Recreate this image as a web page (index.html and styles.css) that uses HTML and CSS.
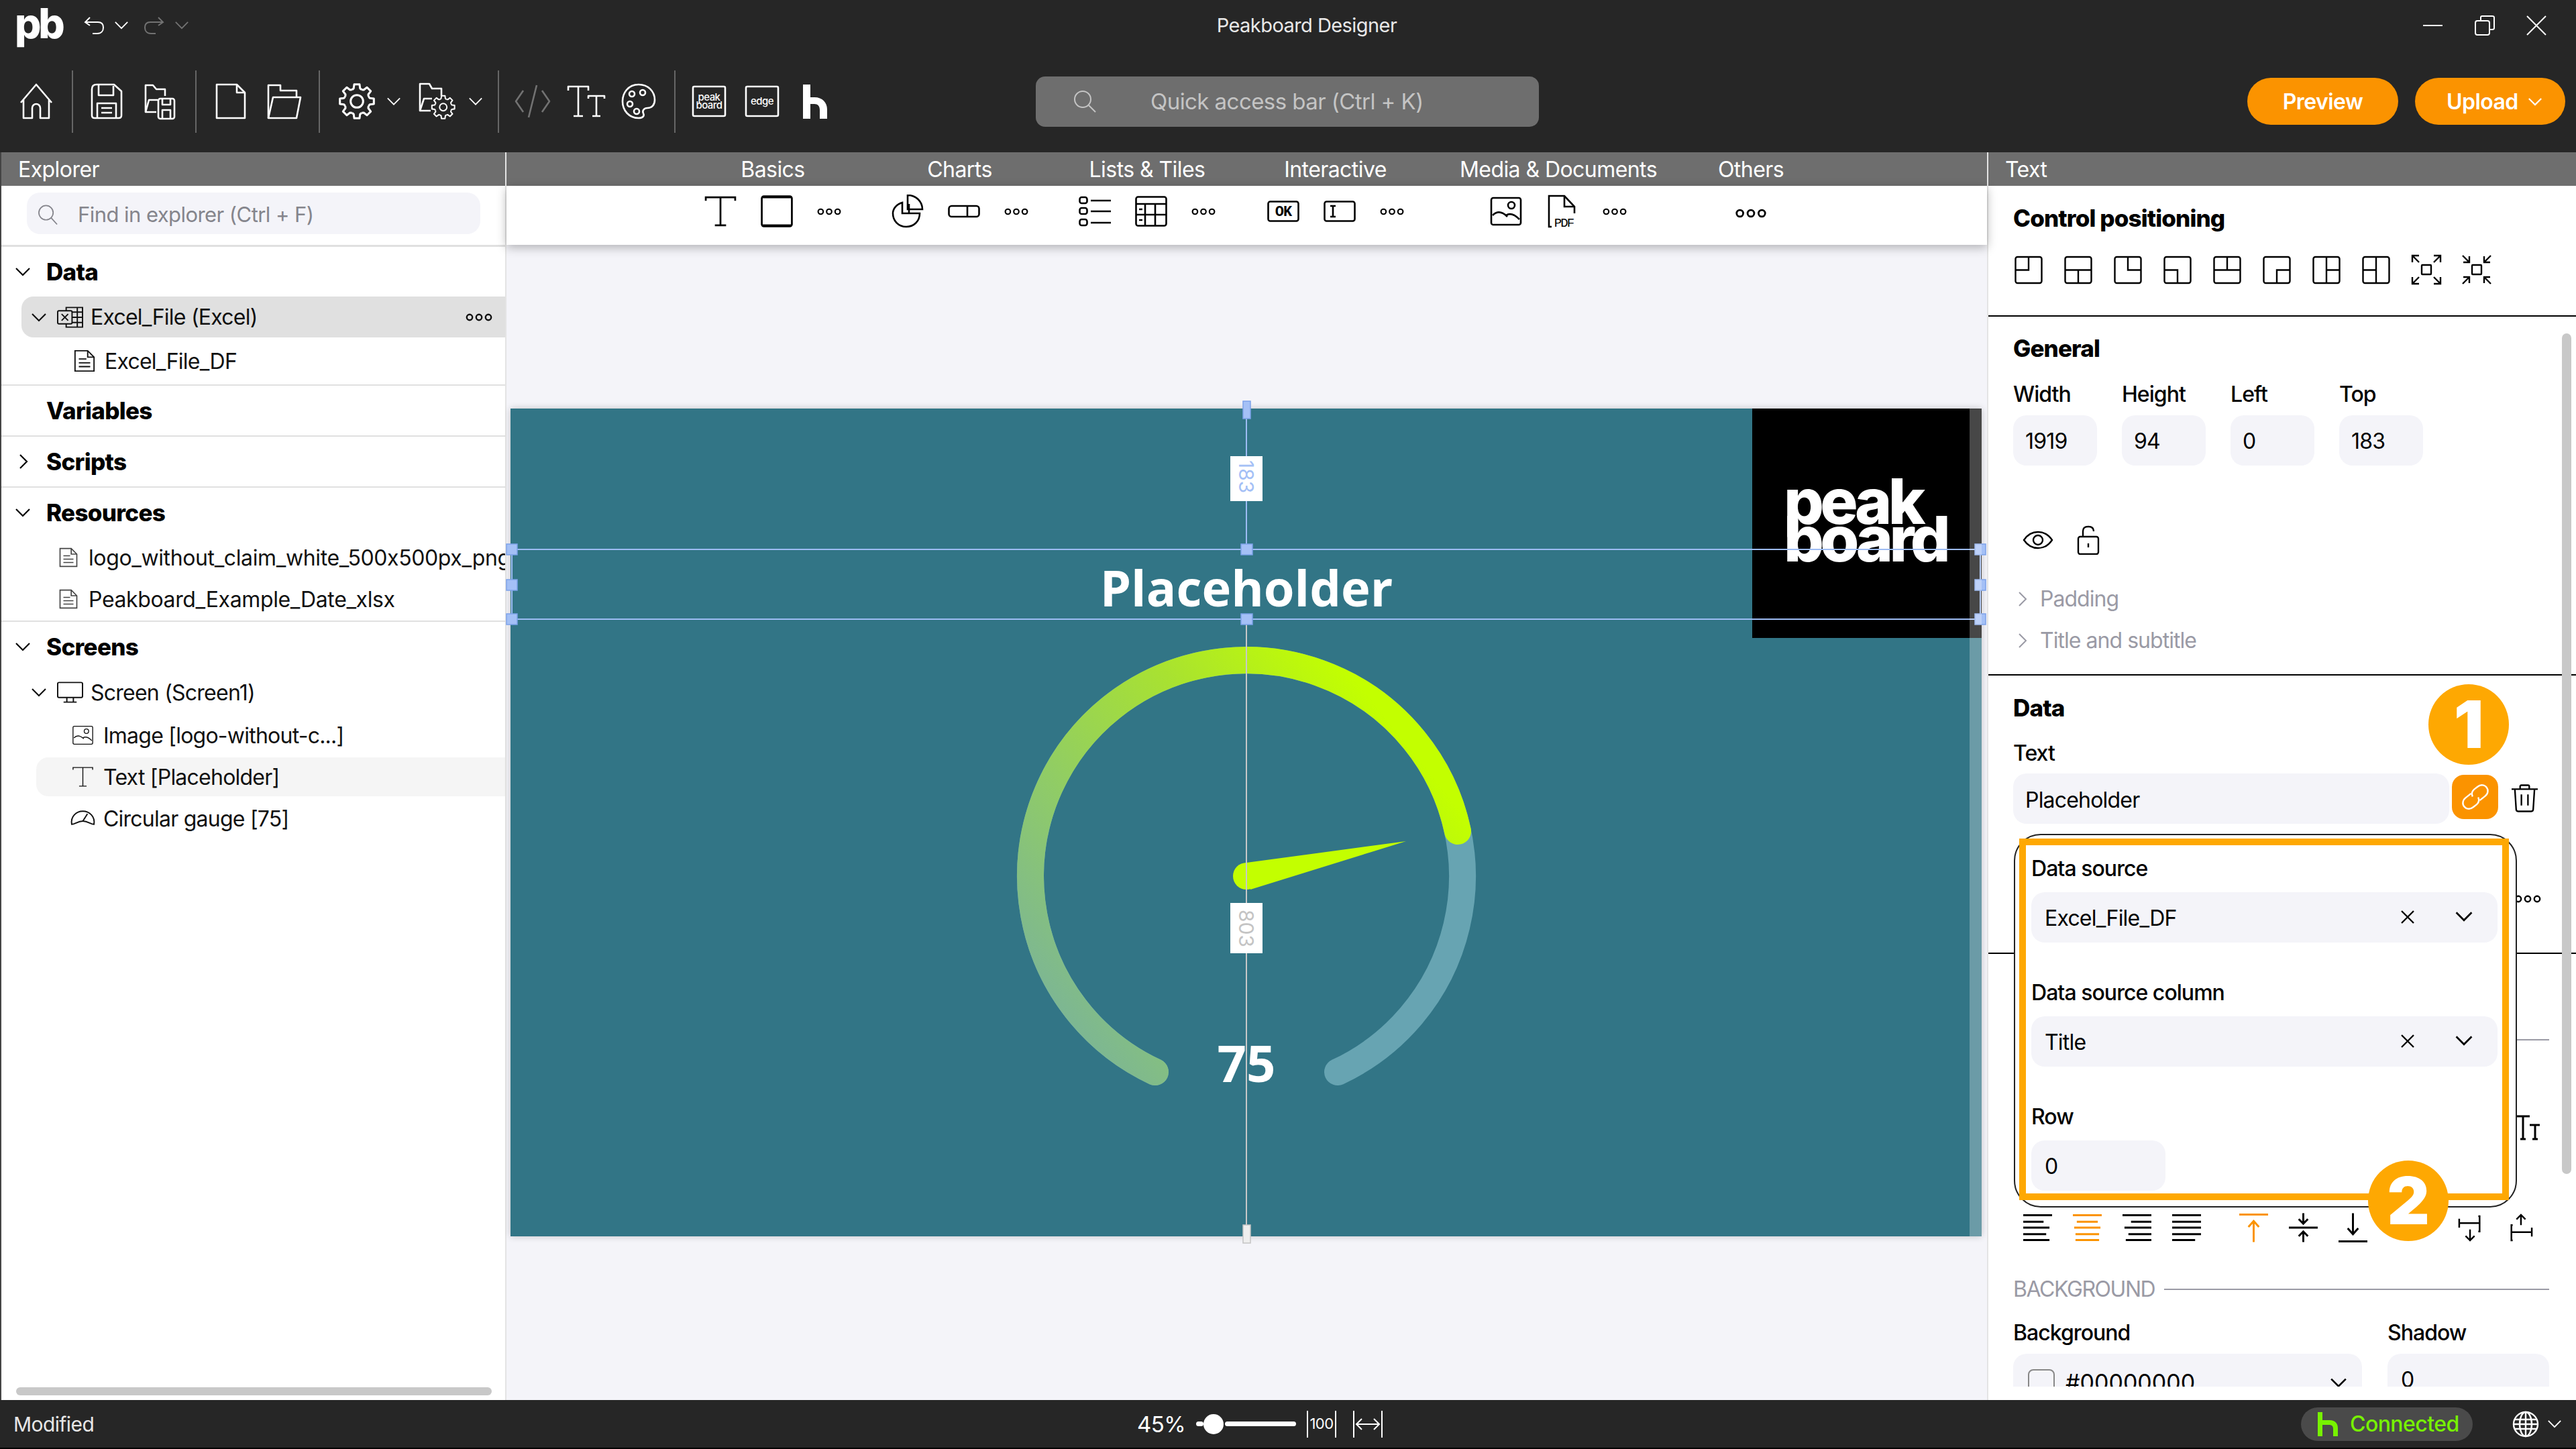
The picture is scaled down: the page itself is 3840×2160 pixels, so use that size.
FILE: index.html
```html
<!DOCTYPE html>
<html lang="en">
<head>
    <meta charset="UTF-8">
    <title>Peakboard Designer</title>
    <link rel="stylesheet" href="styles.css">
</head>
<body>

<svg class="defs" xmlns="http://www.w3.org/2000/svg">
    <defs>
        <path id="gear-seg" d="M17.9 9.2 19.9 7.5 20.6 2.3H27.4L28.1 7.5 30.1 9.2"/>
        <g id="gear-shape">
            <use href="#gear-seg"/>
            <use href="#gear-seg" transform="rotate(45 24 24)"/>
            <use href="#gear-seg" transform="rotate(90 24 24)"/>
            <use href="#gear-seg" transform="rotate(135 24 24)"/>
            <use href="#gear-seg" transform="rotate(180 24 24)"/>
            <use href="#gear-seg" transform="rotate(225 24 24)"/>
            <use href="#gear-seg" transform="rotate(270 24 24)"/>
            <use href="#gear-seg" transform="rotate(315 24 24)"/>
        </g>
        <linearGradient id="gauge-fill" gradientUnits="userSpaceOnUse" x1="1620" y1="1640" x2="2170" y2="1200">
            <stop offset="0" stop-color="#78b19e"/>
            <stop offset="0.35" stop-color="#8fcb68"/>
            <stop offset="0.7" stop-color="#a9e230"/>
            <stop offset="1" stop-color="#c3ff00"/>
        </linearGradient>
    </defs>
    <symbol id="chev-down" viewBox="0 0 24 14"><path d="M2 2 12 12 22 2"/></symbol>
    <symbol id="chev-right" viewBox="0 0 14 24"><path d="M2 2 12 12 2 22"/></symbol>
    <symbol id="dots" viewBox="0 0 40 12"><circle cx="6" cy="6" r="4.2"/><circle cx="20" cy="6" r="4.2"/><circle cx="34" cy="6" r="4.2"/></symbol>
    <symbol id="doc-lines" viewBox="0 0 36 36"><path d="M3 2H23L33 12V34H3Z"/><path d="M23 2V12H33M9 15H21M9 21H27M9 27H27"/></symbol>
    <symbol id="text-t" viewBox="0 0 46 46"><path d="M2 8V3H44V8M23 3V43M15 43H31"/></symbol>
    <symbol id="image" viewBox="0 0 48 48"><rect x="2" y="4" width="44" height="40" rx="3"/><circle cx="32" cy="15" r="5"/><path d="M4 30C12 22 20 26 26 32M24 30C30 26 36 28 44 36"/></symbol>
</svg>

<div class="app">
    <header class="titlebar">
        <div class="title-left">
            <span class="pb-logo">pb</span>
            <svg class="ic-undo" viewBox="0 0 32 28"><path d="M10 2 3 9 10 14M3 9H22C28 9 30 13 30 17 30 22 27 26 21 26H14"/></svg>
            <svg class="ic-chev-sm"><use href="#chev-down"/></svg>
            <svg class="ic-undo dim" viewBox="0 0 32 28"><path d="M22 2 29 9 22 14M29 9H10C4 9 2 13 2 17 2 22 5 26 11 26H18"/></svg>
            <svg class="ic-chev-sm dim"><use href="#chev-down"/></svg>
        </div>
        <div class="title-text">Peakboard Designer</div>
        <div class="window-btns">
            <svg viewBox="0 0 30 30"><path d="M0 15H29"/></svg>
            <svg viewBox="0 0 30 30"><path d="M9 7V3Q9 1 11 1H26Q29 1 29 3V19Q29 21 26 21H23"/><rect x="1" y="8" width="21" height="21" rx="3"/></svg>
            <svg viewBox="0 0 30 30"><path d="M1 1 29 29M29 1 1 29"/></svg>
        </div>
    </header>

    <div class="toolbar">
        <div class="tool-groups">
            <div class="tool-group">
                <svg class="tool" viewBox="0 0 64 56"><path d="M9 30 32 3 55 30M13 26V53H26V38A6 6 0 0 1 38 38V53H51V26"/></svg>
            </div>
            <div class="tool-group">
                <svg class="tool" viewBox="0 0 64 56"><path d="M17 3H43L54 13V49Q54 53 50 53H14Q10 53 10 49V10Q10 3 17 3Z"/><path d="M20 3V19H42V5M18 53V31H46V53M24 38H40M24 45H40"/></svg>
                <svg class="tool" viewBox="0 0 64 56"><path d="M27 44H11V4H22L27 10H40V20"/><path d="M11 44 16 26H29"/><rect x="30" y="24" width="24" height="30" rx="3"/><path d="M36 24V33H48V24M36 54V41H48V54"/></svg>
            </div>
            <div class="tool-group">
                <svg class="tool" viewBox="0 0 64 56"><path d="M12 3H42L54 15V53H12Z"/><path d="M42 3V15H54"/></svg>
                <svg class="tool" viewBox="0 0 64 56"><path d="M10 53V4H28V12H52V22"/><path d="M10 53 17 22H58L52 53Z"/></svg>
            </div>
            <div class="tool-group group-settings">
                <svg class="tool" viewBox="0 0 48 48"><use href="#gear-shape"/><circle cx="24" cy="24" r="8"/></svg>
                <svg class="tool-chev"><use href="#chev-down"/></svg>
                <svg class="tool folder-gear" viewBox="0 0 64 56"><path d="M26 42H10V2H24L28 9H42V20"/><path d="M10 42 16 24H28"/><g transform="translate(26 18) scale(.78)"><use href="#gear-shape"/><circle cx="24" cy="24" r="7"/></g></svg>
                <svg class="tool-chev"><use href="#chev-down"/></svg>
            </div>
            <div class="tool-group">
                <svg class="tool dim" viewBox="0 0 64 56"><path d="M18 12 7 28 18 44M46 12 57 28 46 44M38 4 26 52"/></svg>
                <svg class="tool" viewBox="0 0 64 56"><path d="M6 12V6H36V12M21 6V50M14 50H28M36 24V20H60V24M48 20V50M42 50H54"/></svg>
                <svg class="tool" viewBox="0 0 64 56"><path d="M32 3C16 3 8 16 8 28 8 42 18 53 32 53 38 53 41 50 39 46 37 42 40 38 45 38 52 38 56 33 56 26 56 13 46 3 32 3Z"/><circle cx="22" cy="17" r="4"/><circle cx="38" cy="15" r="4"/><circle cx="19" cy="32" r="4"/><circle cx="29" cy="43" r="4"/></svg>
            </div>
            <div class="tool-group">
                <svg class="tool" viewBox="0 0 64 56"><rect x="8" y="6" width="48" height="44" rx="2"/><text class="tool-word" x="32" y="27">peak</text><text class="tool-word" x="32" y="39">board</text></svg>
                <svg class="tool" viewBox="0 0 64 56"><rect x="8" y="6" width="48" height="44" rx="2"/><text class="tool-word" x="32" y="33">edge</text></svg>
                <svg class="tool" viewBox="0 0 64 56"><path class="solid" d="M14 3H25V22H31C43 22 50 30 50 40V54H39V41C39 35 36 32 31 32H25V54H14Z"/></svg>
            </div>
        </div>
        <div class="quick-bar">
            <svg viewBox="0 0 36 36"><circle cx="15" cy="15" r="12"/><path d="M24 24 34 34"/></svg>
            <span>Quick access bar (Ctrl + K)</span>
        </div>
        <div class="action-btns">
            <div class="btn-orange btn-preview">Preview</div>
            <div class="btn-orange btn-upload">Upload <svg><use href="#chev-down"/></svg></div>
        </div>
    </div>

    <div class="main">
        <aside class="explorer">
            <div class="panel-head">Explorer</div>
            <div class="search-wrap">
                <div class="search-box">
                    <svg viewBox="0 0 32 32"><circle cx="13" cy="13" r="11"/><path d="M21 21 30 31"/></svg>
                    <span>Find in explorer (Ctrl + F)</span>
                </div>
            </div>
            <div class="tree">
                <section class="tree-section">
                    <div class="tree-head"><svg class="chev"><use href="#chev-down"/></svg>Data</div>
                    <div class="row row-selected">
                        <svg class="chev"><use href="#chev-down"/></svg>
                        <svg class="row-ic wide" viewBox="0 0 40 32"><rect x="1" y="6" width="22" height="20" rx="2"/><path d="M7 11 17 21M17 11 7 21M14 6V1H39V31H14V26M23 8H39M23 16H39M23 24H39M31 1V31"/></svg>
                        <span>Excel_File (Excel)</span>
                        <svg class="row-dots"><use href="#dots"/></svg>
                    </div>
                    <div class="row row-child">
                        <svg class="row-ic doc"><use href="#doc-lines"/></svg>
                        <span>Excel_File_DF</span>
                    </div>
                </section>
                <section class="tree-section">
                    <div class="tree-head"><span class="chev"></span>Variables</div>
                </section>
                <section class="tree-section">
                    <div class="tree-head"><svg class="chev chev-r"><use href="#chev-right"/></svg>Scripts</div>
                </section>
                <section class="tree-section res-section">
                    <div class="tree-head"><svg class="chev"><use href="#chev-down"/></svg>Resources</div>
                    <div class="row row-res">
                        <svg class="row-ic res"><use href="#doc-lines"/></svg>
                        <span>logo_without_claim_white_500x500px_png</span>
                    </div>
                    <div class="row row-res">
                        <svg class="row-ic res"><use href="#doc-lines"/></svg>
                        <span>Peakboard_Example_Date_xlsx</span>
                    </div>
                </section>
                <section class="tree-section no-line">
                    <div class="tree-head"><svg class="chev"><use href="#chev-down"/></svg>Screens</div>
                    <div class="row row-screen">
                        <svg class="chev"><use href="#chev-down"/></svg>
                        <svg class="row-ic wide" viewBox="0 0 40 32"><rect x="1" y="1" width="38" height="23" rx="2"/><path d="M15 24V31M25 24V31M10 31H30"/></svg>
                        <span>Screen (Screen1)</span>
                    </div>
                    <div class="row row-child2">
                        <svg class="row-ic wide"><use href="#image"/></svg>
                        <span>Image [logo-without-c...]</span>
                    </div>
                    <div class="row row-child2 row-hover">
                        <svg class="row-ic wide"><use href="#text-t"/></svg>
                        <span>Text [Placeholder]</span>
                    </div>
                    <div class="row row-child2">
                        <svg class="row-ic wide" viewBox="0 0 40 32"><path d="M3 25C1 13 10 5 20 5 30 5 39 13 37 25 32 25 28 20 20 20 12 20 8 25 3 25Z"/><path d="M20 20 27 9"/></svg>
                        <span>Circular gauge [75]</span>
                    </div>
                </section>
            </div>
            <div class="hscroll"></div>
        </aside>

        <main class="stage">
            <div class="ribbon-labels">
                <div>Basics</div><div>Charts</div><div>Lists &amp; Tiles</div><div>Interactive</div><div>Media &amp; Documents</div><div>Others</div>
            </div>
            <div class="ribbon-tools">
                <div class="ribbon-cell">
                    <svg class="rb" viewBox="0 0 46 46"><use href="#text-t"/></svg>
                    <svg class="rb" viewBox="0 0 46 46"><rect x="1.5" y="1.5" width="43" height="43" rx="3"/><path d="M2 3H44M2 43H44"/></svg>
                    <svg class="rb-dots"><use href="#dots"/></svg>
                </div>
                <div class="ribbon-cell">
                    <svg class="rb" viewBox="0 0 48 50"><path d="M26 14V28H42C42 40 33 48 22 48 10 48 2 39 2 28 2 21 8 14 16 12V28H26"/><path d="M24 1V22H46C46 10 36 1 24 1Z"/></svg>
                    <svg class="rb" viewBox="0 0 48 48"><rect x="1.5" y="16" width="45" height="16" rx="4"/><path d="M29 16V32"/></svg>
                    <svg class="rb-dots"><use href="#dots"/></svg>
                </div>
                <div class="ribbon-cell">
                    <svg class="rb" viewBox="0 0 48 46"><rect x="1.5" y="2" width="11" height="9" rx="3"/><rect x="1.5" y="18" width="11" height="9" rx="3"/><rect x="1.5" y="35" width="11" height="9" rx="3"/><path d="M18 7H48M18 23H48M18 40H48"/></svg>
                    <svg class="rb" viewBox="0 0 48 46"><rect x="1.5" y="1.5" width="45" height="43" rx="3"/><path d="M2 12H46M2 28H46M15 12V44M30 12V44M6 20H11M6 36H11"/></svg>
                    <svg class="rb-dots"><use href="#dots"/></svg>
                </div>
                <div class="ribbon-cell">
                    <svg class="rb" viewBox="0 0 48 32"><rect x="1.5" y="1.5" width="45" height="29" rx="3"/><text class="rb-word" x="24" y="23">OK</text></svg>
                    <svg class="rb" viewBox="0 0 48 32"><rect x="1.5" y="1.5" width="45" height="29" rx="3"/><path d="M10 8H18M14 8V24M10 24H18"/></svg>
                    <svg class="rb-dots"><use href="#dots"/></svg>
                </div>
                <div class="ribbon-cell">
                    <svg class="rb" viewBox="0 0 48 50"><use href="#image"/></svg>
                    <svg class="rb rb-pdf" viewBox="0 0 48 50"><path d="M8 48H4V2H27L42 18V28"/><path d="M27 2V18H42"/><text class="rb-word pdf" x="26" y="48">PDF</text></svg>
                    <svg class="rb-dots"><use href="#dots"/></svg>
                </div>
                <div class="ribbon-cell">
                    <svg class="rb-dots big"><use href="#dots"/></svg>
                </div>
            </div>
            <div class="stage-body">
                <div class="canvas">
                    <div class="canvas-logo"><span>peak</span><span>board</span></div>
                    <svg class="canvas-art" viewBox="761 609 2193 1234">
                        <path class="gauge-track" d="M1722 1598A322 322 0 1 1 1994 1598"/>
                        <path class="gauge-value" d="M1722 1598A322 322 0 1 1 2173 1239"/>
                        <circle class="gauge-needle" cx="1858" cy="1306" r="20"/>
                        <path class="gauge-needle" d="M1858 1286 2096 1254 1864 1326Z"/>
                        <text class="art-title" x="1858" y="904">Placeholder</text>
                        <text class="art-value" x="1858" y="1613">75</text>
                        <path class="sel-grey" d="M1858 923V1826"/>
                        <path class="sel-line" d="M1858 623V819M761 819H2952M761 923H2952M763 819V923M2952 819V923"/>
                        <rect class="sel-handle" x="1853" y="598" width="11" height="26"/>
                        <rect class="sel-handle" x="1850" y="811" width="17" height="16"/>
                        <rect class="sel-handle" x="1850" y="915" width="17" height="16"/>
                        <rect class="sel-handle" x="755" y="811" width="16" height="16"/>
                        <rect class="sel-handle" x="755" y="864" width="16" height="16"/>
                        <rect class="sel-handle" x="755" y="915" width="16" height="16"/>
                        <rect class="sel-handle" x="2944" y="811" width="16" height="16"/>
                        <rect class="sel-handle" x="2944" y="864" width="16" height="16"/>
                        <rect class="sel-handle" x="2944" y="915" width="16" height="16"/>
                        <rect class="sel-handle-grey" x="1853" y="1826" width="11" height="27"/>
                        <rect class="sel-tag" x="1834" y="680" width="48" height="67"/>
                        <text class="sel-num blue" transform="translate(1847 686) rotate(90)">183</text>
                        <rect class="sel-tag" x="1834" y="1346" width="48" height="75"/>
                        <text class="sel-num" transform="translate(1847 1356) rotate(90)">803</text>
                    </svg>
                    <div class="canvas-strip"></div>
                </div>
            </div>
        </main>

        <aside class="props">
            <div class="panel-head">Text</div>
            <section class="props-top">
                <h3>Control positioning</h3>
                <div class="pos-row">
                    <svg class="pos" viewBox="0 0 42 42"><rect x="1.5" y="1.5" width="39" height="39" rx="3"/><path d="M21 2V21H2"/></svg>
                    <svg class="pos" viewBox="0 0 42 42"><rect x="1.5" y="1.5" width="39" height="39" rx="3"/><path d="M2 21H40M21 21V40"/></svg>
                    <svg class="pos" viewBox="0 0 42 42"><rect x="1.5" y="1.5" width="39" height="39" rx="3"/><path d="M21 2V21H40"/></svg>
                    <svg class="pos" viewBox="0 0 42 42"><rect x="1.5" y="1.5" width="39" height="39" rx="3"/><path d="M2 21H21V40"/></svg>
                    <svg class="pos" viewBox="0 0 42 42"><rect x="1.5" y="1.5" width="39" height="39" rx="3"/><path d="M2 21H40M21 2V21"/></svg>
                    <svg class="pos" viewBox="0 0 42 42"><rect x="1.5" y="1.5" width="39" height="39" rx="3"/><path d="M40 21H21V40"/></svg>
                    <svg class="pos" viewBox="0 0 42 42"><rect x="1.5" y="1.5" width="39" height="39" rx="3"/><path d="M21 2V40M21 21H40"/></svg>
                    <svg class="pos" viewBox="0 0 42 42"><rect x="1.5" y="1.5" width="39" height="39" rx="3"/><path d="M21 2V40M2 21H21"/></svg>
                    <svg class="pos pos-arrows" viewBox="0 0 46 46"><rect x="16" y="16" width="14" height="14" rx="1"/><path d="M2 12V2H12M2 2 12 12M34 2H44V12M44 2 34 12M2 34V44H12M2 44 12 34M34 44H44V34M44 44 34 34"/></svg>
                    <svg class="pos pos-arrows" viewBox="0 0 46 46"><rect x="16" y="16" width="14" height="14" rx="1"/><path d="M2 2 12 12M12 3V12H3M44 2 34 12M34 3V12H43M2 44 12 34M12 43V34H3M44 44 34 34M34 43V34H43"/></svg>
                </div>
            </section>
            <div class="props-scroll">
                <section class="props-general">
                    <h3>General</h3>
                    <div class="field-row">
                        <div class="field"><label>Width</label><div class="input">1919</div></div>
                        <div class="field"><label>Height</label><div class="input">94</div></div>
                        <div class="field"><label>Left</label><div class="input">0</div></div>
                        <div class="field"><label>Top</label><div class="input">183</div></div>
                    </div>
                    <div class="visibility">
                        <svg class="ic-eye" viewBox="0 0 46 28"><path d="M2 14C8 5 15 2 23 2 31 2 38 5 44 14 38 23 31 26 23 26 15 26 8 23 2 14Z"/><circle cx="23" cy="14" r="7"/></svg>
                        <svg class="ic-lock" viewBox="0 0 34 44"><rect x="2" y="17" width="30" height="26" rx="3"/><path d="M9 17V9C9 4 12 2 17 2 22 2 25 4 25 9M17 27V33"/></svg>
                    </div>
                    <div class="collapsed first"><svg><use href="#chev-right"/></svg>Padding</div>
                    <div class="collapsed"><svg><use href="#chev-right"/></svg>Title and subtitle</div>
                </section>
                <section class="props-data">
                    <h3>Data</h3>
                    <label>Text</label>
                    <div class="text-row">
                        <div class="input input-wide">Placeholder</div>
                        <div class="link-btn"><svg viewBox="0 0 44 36"><g transform="rotate(-38 22 18)"><path d="M20 10H10C4 10 0 14 0 19 0 24 4 28 10 28H16C21 28 24 25 25 21"/><path d="M24 26H34C40 26 44 22 44 17 44 12 40 8 34 8H28C23 8 20 11 19 15"/></g></svg></div>
                        <svg class="ic-trash" viewBox="0 0 42 44"><path d="M1 8H41M14 8V4Q14 2 16 2H26Q28 2 28 4V8M6 8 8 39Q8 42 11 42H31Q34 42 34 39L36 8M16 16V33M26 16V33"/></svg>
                    </div>
                    <div class="behind">
                        <svg class="behind-dots"><use href="#dots"/></svg>
                        <div class="behind-line"></div>
                        <div class="behind-grey"></div>
                        <svg class="behind-tt" viewBox="0 0 36 38"><path d="M1 2H20M10 2V36M6 36H14M20 15H35M28 15V36M24 36H32"/></svg>
                    </div>
                    <div class="align-row">
                        <svg class="al" viewBox="0 0 46 44"><path d="M1 3H45M1 13H32M1 22H41M1 32H36M1 41H41"/></svg>
                        <svg class="al active" viewBox="0 0 46 44"><path d="M1 3H45M7 13H39M3 22H43M5 32H41M5 41H41"/></svg>
                        <svg class="al" viewBox="0 0 46 44"><path d="M1 3H45M14 13H45M4 22H45M10 32H45M6 41H45"/></svg>
                        <svg class="al" viewBox="0 0 46 44"><path d="M1 3H45M1 13H45M1 22H45M1 32H45M1 41H36"/></svg>
                        <span class="al-gap"></span>
                        <svg class="al active" viewBox="0 0 46 44"><path d="M1 2H45M23 44V12M15 21 23 12 31 21"/></svg>
                        <svg class="al" viewBox="0 0 46 44"><path d="M1 22H45M23 0V16M16 9 23 16 30 9M23 44V28M16 35 23 28 30 35"/></svg>
                        <svg class="al" viewBox="0 0 46 44"><path d="M1 43H45M23 0V32M15 23 23 32 31 23"/></svg>
                        <span class="al-slot"></span>
                        <svg class="al wrap" viewBox="0 0 40 44"><path d="M2 8V22M2 15H34V4H32M34 15V28H32M19 25V42M12 35 19 42 26 35"/></svg>
                        <svg class="al wrap" viewBox="0 0 40 44"><path d="M38 22V36M38 29H6V42H8M6 29V18H8M21 18V2M14 9 21 2 28 9"/></svg>
                    </div>
                    <div class="divider-label"><span>BACKGROUND</span><i></i></div>
                    <div class="bg-fields">
                        <div class="bg-field"><label>Background</label>
                            <div class="input input-color"><span class="swatch"></span>#00000000<svg><use href="#chev-down"/></svg></div>
                        </div>
                        <div class="shadow-field"><label>Shadow</label>
                            <div class="input">0</div>
                        </div>
                    </div>
                </section>
            </div>
            <div class="vscroll"></div>

            <div class="popover">
                <div class="highlight">
                    <label>Data source</label>
                    <div class="select">Excel_File_DF<svg class="sel-x" viewBox="0 0 20 20"><path d="M1 1 19 19M19 1 1 19"/></svg><svg class="sel-chev"><use href="#chev-down"/></svg></div>
                    <label class="later">Data source column</label>
                    <div class="select">Title<svg class="sel-x" viewBox="0 0 20 20"><path d="M1 1 19 19M19 1 1 19"/></svg><svg class="sel-chev"><use href="#chev-down"/></svg></div>
                    <label class="later">Row</label>
                    <div class="select select-short">0</div>
                </div>
            </div>
            <div class="badge badge-one">1</div>
            <div class="badge badge-two">2</div>
        </aside>
    </div>

    <footer class="statusbar">
        <div class="status-left">Modified</div>
        <div class="zoom-group">
            <span>45%</span>
            <div class="slider"><i class="slider-a"></i><i class="slider-thumb"></i><i class="slider-b"></i></div>
            <svg class="zoom-ic" viewBox="0 0 44 40"><path d="M1 0V40M43 0V40"/><text x="22" y="27">100</text></svg>
            <svg class="zoom-ic" viewBox="0 0 44 40"><path d="M1 0V40M43 0V40M6 20H38M13 12 5 20 13 28M31 12 39 20 31 28"/></svg>
        </div>
        <div class="status-right">
            <div class="connected">
                <svg viewBox="0 0 30 36"><path d="M0 0H7V36H0ZM7 12H18C26 12 30 17 30 24V36H23V25C23 21 21 19 17 19H7Z"/></svg>
                <span>Connected</span>
            </div>
            <svg class="ic-globe" viewBox="0 0 40 40"><circle cx="20" cy="20" r="18"/><ellipse cx="20" cy="20" rx="9" ry="18"/><path d="M20 2V38M3 13H37M3 27H37M2 20H38"/></svg>
            <svg class="ic-chev-sm"><use href="#chev-down"/></svg>
        </div>
    </footer>
</div>

</body>
</html>
```
FILE: styles.css
```css
* {
    box-sizing: border-box;
}
body {
    margin: 0;
    font-family: Inter, "Liberation Sans", sans-serif;
    letter-spacing: -0.035em;
    background: #262626;
    overflow: hidden;
}
.defs {
    width: 0;
    height: 0;
    display: block;
}
svg {
    fill: none;
    stroke: currentColor;
    display: block;
    flex: none;
}
.app {
    width: 3840px;
    height: 2160px;
    display: flex;
    flex-direction: column;
}

/* title bar */
.titlebar {
    height: 75px;
    display: grid;
    grid-template-columns: 1698px 500px 1fr;
    align-items: center;
    color: white;
}
.title-left {
    display: flex;
    align-items: center;
    padding-left: 22px;
}
.pb-logo {
    font-size: 62px;
    font-weight: 800;
    letter-spacing: -0.07em;
    line-height: 70px;
    width: 102px;
    margin-top: -6px;
}
.ic-undo {
    width: 32px;
    height: 28px;
    stroke-width: 2;
    margin-right: 14px;
}
.ic-chev-sm {
    width: 22px;
    height: 13px;
    stroke-width: 2;
    margin-right: 22px;
}
.dim {
    opacity: 0.35;
}
.title-text {
    text-align: center;
    font-size: 29px;
    color: #e8e8e8;
}
.window-btns {
    display: flex;
    justify-content: flex-end;
    gap: 47px;
    padding-right: 44px;
}
.window-btns svg {
    width: 30px;
    height: 30px;
    stroke-width: 2;
}

/* toolbar */
.toolbar {
    height: 152px;
    display: grid;
    grid-template-columns: 1544px 750px 1fr;
    align-items: center;
    color: white;
}
.tool-groups {
    display: flex;
    height: 93px;
    padding-left: 4px;
}
.tool-group {
    display: flex;
    align-items: center;
    gap: 15px;
    padding: 0 21px 0 18px;
    border-right: 2px solid #666;
}
.tool-group:last-child {
    border-right: none;
}
.group-settings {
    width: 267px;
    padding: 0 0 0 23px;
}
.tool {
    width: 64px;
    height: 56px;
    stroke-width: 2.6;
    stroke-linejoin: round;
}
.tool-chev {
    width: 22px;
    height: 14px;
    stroke-width: 2;
    margin: 0 2px 0 -3px;
}
.folder-gear {
    margin-left: 1px;
}
.folder-gear + .tool-chev {
    margin-left: 3px;
}
.solid {
    fill: white;
    stroke: none;
}
.tool-word {
    fill: white;
    stroke: none;
    font-size: 15px;
    font-weight: 500;
    text-anchor: middle;
}
.quick-bar {
    height: 75px;
    background: #6e6e6e;
    border-radius: 14px;
    display: flex;
    align-items: center;
    padding-left: 55px;
    color: #c4c4c4;
    font-size: 33px;
}
.quick-bar svg {
    width: 36px;
    height: 36px;
    stroke-width: 2;
    margin-right: 80px;
}
.action-btns {
    display: flex;
    justify-content: flex-end;
    gap: 25px;
    padding-right: 16px;
}
.btn-orange {
    height: 70px;
    border-radius: 35px;
    background: #fb9300;
    color: white;
    font-size: 32px;
    font-weight: 600;
    display: flex;
    align-items: center;
    justify-content: center;
    gap: 14px;
}
.btn-preview {
    width: 225px;
}
.btn-upload {
    width: 224px;
    justify-content: flex-start;
    padding-left: 47px;
}
.btn-upload svg {
    width: 22px;
    height: 13px;
    stroke-width: 2.4;
}

/* panels */
.main {
    flex: 1;
    display: flex;
    min-height: 0;
}
.panel-head {
    height: 50px;
    background: #6e6e6e;
    color: white;
    font-size: 32px;
    line-height: 52px;
    padding-left: 25px;
}
.explorer {
    width: 755px;
    flex: none;
    background: white;
    border-left: 2px solid #444;
    border-right: 2px solid #e4e4e4;
    display: flex;
    flex-direction: column;
}
.search-wrap {
    height: 91px;
    padding: 10px 37px 0 38px;
    border-bottom: 3px solid #e0e0e0;
}
.search-box {
    height: 62px;
    border-radius: 20px;
    background: #f4f4f9;
    display: flex;
    align-items: center;
    padding: 3px 0 0 16px;
    color: #85858c;
    font-size: 31px;
}
.search-box svg {
    width: 31px;
    height: 32px;
    stroke-width: 1.8;
    margin-right: 29px;
}
.tree {
    flex: 1;
    overflow: hidden;
}
.tree-section {
    border-bottom: 2px solid #e0e0e0;
    padding-bottom: 4px;
}
.tree-section.res-section {
    padding-bottom: 1px;
}
.tree-section.no-line {
    border-bottom: none;
}
.tree-section:nth-child(2),
.tree-section:nth-child(3) {
    padding-bottom: 0;
}
.tree-head {
    height: 74px;
    display: flex;
    align-items: center;
    font-size: 35px;
    font-weight: 800;
    color: black;
    padding-left: 20px;
    letter-spacing: -0.02em;
}
.chev {
    width: 24px;
    height: 14px;
    stroke-width: 2.2;
    margin-right: 23px;
    flex: none;
}
.chev-r {
    width: 14px;
    height: 24px;
    margin-left: 6px;
    margin-right: 27px;
}
.row {
    height: 62px;
    display: flex;
    align-items: center;
    font-size: 32px;
    color: #111;
    white-space: nowrap;
    overflow: hidden;
    letter-spacing: -0.024em;
}
.row-selected {
    height: 61px;
    margin-left: 30px;
    background: #e0e0e0;
    border-radius: 18px 0 0 18px;
    padding-left: 14px;
}
.row-selected .chev,
.row-screen .chev {
    margin-right: 15px;
}
.row-ic {
    stroke-width: 2;
    flex: none;
}
.row-ic.wide {
    width: 39px;
    height: 32px;
    margin-right: 11px;
}
.row-ic.doc {
    width: 34px;
    height: 36px;
    margin-right: 13px;
}
.row-ic.res {
    width: 30px;
    height: 36px;
    margin-right: 15px;
    color: #444;
}
.row-dots {
    width: 40px;
    height: 12px;
    stroke-width: 2.4;
    margin-left: auto;
    margin-right: 19px;
}
.row-child {
    margin-top: 4px;
    padding-left: 107px;
}
.row.row-res {
    padding-left: 85px;
    letter-spacing: -0.012em;
}
.res-section .tree-head {
    height: 73px;
}
.row-screen {
    padding-left: 44px;
}
.row-child2 {
    margin-top: 2px;
    padding-left: 102px;
}
.row-hover {
    height: 58px;
    margin-left: 52px;
    padding-left: 50px;
    background: #f5f5f5;
    border-radius: 18px 0 0 18px;
}
.hscroll {
    height: 12px;
    margin: 0 20px 7px 22px;
    border-radius: 6px;
    background: #c8c8c8;
}

/* centre */
.stage {
    flex: 1;
    display: flex;
    flex-direction: column;
    background: #f4f4f9;
    min-width: 0;
}
.ribbon-labels,
.ribbon-tools {
    display: grid;
    grid-template-columns: 278px 279px 280px 281px 384px 190px;
    padding-left: 258px;
}
.ribbon-labels {
    height: 50px;
    background: #6e6e6e;
    color: white;
    font-size: 32px;
    line-height: 52px;
    text-align: center;
}
.ribbon-tools {
    height: 88px;
    background: white;
    position: relative;
    box-shadow: 0 4px 14px rgba(0, 0, 0, 0.28);
    z-index: 1;
    padding-top: 13px;
}
.ribbon-cell {
    display: flex;
    justify-content: center;
    gap: 36px;
    color: black;
}
.rb {
    width: 48px;
    height: 50px;
    stroke-width: 2.6;
}
.rb-pdf {
    overflow: hidden;
}
.rb-dots {
    width: 36px;
    height: 11px;
    margin-top: 20px;
    stroke-width: 2.4;
}
.rb-dots.big {
    width: 48px;
    height: 14px;
    margin-top: 21px;
}
.rb-word {
    fill: black;
    stroke: none;
    font-size: 22px;
    font-weight: 600;
    text-anchor: middle;
    letter-spacing: -0.04em;
    font-family: "Liberation Mono", monospace;
}
.rb-word.pdf {
    font-size: 19px;
    font-weight: 400;
    letter-spacing: -0.1em;
}
.stage-body {
    flex: 1;
    padding: 244px 0 0 6px;
}
.canvas {
    width: 2193px;
    height: 1234px;
    background: #327586;
    position: relative;
    box-shadow: 0 0 10px rgba(0, 0, 0, 0.2);
}
.canvas-logo {
    position: absolute;
    top: 0;
    right: 0;
    width: 342px;
    height: 342px;
    background: black;
    color: white;
    display: flex;
    flex-direction: column;
    padding: 110px 0 0 47px;
    font-size: 94px;
    font-weight: 800;
    line-height: 56px;
    letter-spacing: -0.06em;
}
.canvas-art {
    position: absolute;
    top: 0;
    left: 0;
    width: 2193px;
    height: 1234px;
    overflow: visible;
}
.canvas-strip {
    position: absolute;
    top: 0;
    right: 0;
    width: 18px;
    height: 1234px;
    background: rgba(255, 255, 255, 0.28);
}
.gauge-track,
.gauge-value {
    stroke-width: 40;
    stroke-linecap: round;
}
.gauge-track {
    stroke: #67a4b2;
}
.gauge-value {
    stroke: url(#gauge-fill);
}
.gauge-needle {
    fill: #c3ff00;
    stroke: none;
}
.art-title,
.art-value {
    fill: white;
    stroke: none;
    font-family: "Open Sans", sans-serif;
    font-weight: 700;
    text-anchor: middle;
    letter-spacing: 0;
}
.art-title {
    font-size: 74px;
}
.art-value {
    font-size: 76px;
}
.sel-line {
    stroke: #9dbcf3;
    stroke-width: 2;
}
.sel-grey {
    stroke: #c8c8c8;
    stroke-width: 2;
}
.sel-handle {
    fill: #a4c0f6;
    stroke: #7da3ea;
    stroke-width: 1.5;
}
.sel-handle-grey {
    fill: #eeeeee;
    stroke: #c4c4c4;
    stroke-width: 1.5;
}
.sel-tag {
    fill: white;
    stroke: none;
}
.sel-num {
    fill: #c4c4c4;
    stroke: none;
    font-size: 30px;
    letter-spacing: 0;
}
.sel-num.blue {
    fill: #a4c0f6;
}

/* properties */
.props {
    width: 878px;
    flex: none;
    background: white;
    border-left: 2px solid #e4e4e4;
    position: relative;
    display: flex;
    flex-direction: column;
    color: black;
}
.props h3 {
    margin: 0;
    font-size: 35px;
    font-weight: 800;
    line-height: 40px;
    letter-spacing: -0.025em;
}
.props label {
    display: block;
    font-size: 32px;
    font-weight: 500;
    line-height: 40px;
    letter-spacing: -0.03em;
}
.props-top {
    height: 195px;
    padding: 28px 0 0 37px;
    border-bottom: 2px solid black;
}
.pos-row {
    display: flex;
    gap: 32px;
    margin: 36px 0 0 2px;
}
.pos {
    width: 42px;
    height: 43px;
    stroke-width: 2.4;
}
.pos-arrows {
    width: 46px;
    height: 46px;
    margin: -2px -2px 0 -1px;
}
.props-scroll {
    height: 1595px;
    overflow: hidden;
}
.props-general {
    height: 535px;
    padding: 27px 0 0 37px;
    border-bottom: 2px solid black;
}
.field-row {
    display: flex;
    margin-top: 29px;
}
.field {
    margin-right: 37px;
}
.input {
    width: 125px;
    height: 75px;
    margin-top: 11px;
    border-radius: 20px;
    background: #f4f4f9;
    font-size: 32px;
    line-height: 77px;
    padding-left: 18px;
    letter-spacing: -0.025em;
}
.visibility {
    display: flex;
    align-items: center;
    gap: 35px;
    margin: 89px 0 0 14px;
}
.ic-eye {
    width: 46px;
    height: 28px;
    stroke-width: 2.4;
}
.ic-lock {
    width: 34px;
    height: 44px;
    stroke-width: 2.4;
}
.collapsed {
    display: flex;
    align-items: center;
    font-size: 32px;
    line-height: 40px;
    margin-top: 22px;
    color: #9a9aa5;
    letter-spacing: -0.03em;
}
.collapsed.first {
    margin-top: 46px;
}
.collapsed svg {
    width: 14px;
    height: 24px;
    margin: 0 19px 0 7px;
    stroke-width: 2;
}
.props-data {
    padding: 28px 0 0 37px;
}
.props-data > label {
    margin-top: 28px;
}
.text-row {
    display: flex;
    margin-top: 10px;
    height: 75px;
}
.input-wide {
    width: 650px;
    margin-top: 0;
    line-height: 79px;
}
.link-btn {
    width: 69px;
    height: 66px;
    margin: 2px 0 0 4px;
    background: #fb9300;
    border-radius: 18px;
    color: white;
    display: flex;
    align-items: center;
    justify-content: center;
}
.link-btn svg {
    width: 44px;
    height: 36px;
    stroke-width: 2.4;
    overflow: visible;
}
.ic-trash {
    width: 41px;
    height: 44px;
    margin: 15px 0 0 19px;
    stroke-width: 2.4;
}
.behind {
    display: flow-root;
    height: 580px;
    margin-left: -37px;
}
.behind-dots {
    width: 40px;
    height: 12px;
    stroke-width: 2.4;
    margin: 106px 0 0 784px;
}
.behind-line {
    height: 2px;
    background: black;
    margin-top: 74px;
}
.behind-grey {
    height: 2px;
    width: 50px;
    background: #9a9aa5;
    margin: 127px 0 0 786px;
}
.behind-tt {
    width: 36px;
    height: 38px;
    stroke-width: 3;
    margin: 111px 0 0 787px;
}
.align-row {
    display: flex;
    height: 45px;
    gap: 29px;
    padding-left: 14px;
}
.al {
    width: 45px;
    height: 44px;
    stroke-width: 3;
}
.al.active {
    color: #fb9300;
}
.al-gap {
    width: 0;
    margin-right: -3px;
}
.al-slot {
    width: 45px;
    margin-right: 31px;
}
.al.wrap {
    width: 38px;
    margin-right: 7px;
    stroke-width: 2.6;
}
.divider-label {
    display: flex;
    align-items: center;
    margin-top: 49px;
    color: #9a9aa5;
    font-size: 32px;
    line-height: 40px;
    letter-spacing: -0.045em;
}
.divider-label i {
    flex: none;
    width: 574px;
    height: 2px;
    background: #9a9aa5;
    margin-left: 14px;
}
.bg-fields {
    display: flex;
    margin-top: 25px;
}
.bg-field {
    width: 558px;
}
.input-color {
    width: 520px;
    height: 90px;
    line-height: 1;
    display: flex;
    align-items: center;
    padding: 0 22px 4px;
    font-size: 34px;
    letter-spacing: 0;
}
.swatch {
    width: 40px;
    height: 40px;
    border: 2px solid #888;
    border-radius: 8px;
    margin-right: 16px;
}
.input-color svg {
    width: 26px;
    height: 16px;
    stroke-width: 2.4;
    margin-left: auto;
    margin-right: 0;
}
.shadow-field .input {
    width: 241px;
    height: 90px;
    padding-left: 20px;
    line-height: 78px;
}
.vscroll {
    position: absolute;
    top: 270px;
    right: 7px;
    width: 14px;
    height: 1253px;
    border-radius: 7px;
    background: #c8c8c8;
}

/* popover with the data binding, over the panel */
.popover {
    position: absolute;
    top: 1016px;
    left: 38px;
    width: 750px;
    height: 557px;
    background: white;
    border: 2px solid #222;
    border-radius: 40px;
}
.highlight {
    width: 730px;
    height: 539px;
    margin: 5px 0 0 6px;
    border: 10px solid #fea802;
    padding: 15px 7px 0 8px;
}
.highlight .later {
    margin-top: 55px;
}
.select {
    height: 75px;
    margin-top: 15px;
    background: #f4f4f9;
    border-radius: 20px;
    display: flex;
    align-items: center;
    padding: 2px 0 0 20px;
    font-size: 32px;
    letter-spacing: -0.025em;
}
.select-short {
    width: 200px;
}
.sel-x {
    width: 20px;
    height: 20px;
    stroke-width: 2.4;
    margin: -4px 2px 0 auto;
}
.sel-chev {
    width: 28px;
    height: 16px;
    stroke-width: 2.4;
    margin: -6px 36px 0 58px;
}
.badge {
    position: absolute;
    width: 120px;
    height: 120px;
    border-radius: 50%;
    background: #fea802;
    color: white;
    font-size: 98px;
    font-weight: 900;
    line-height: 120px;
    text-align: center;
}
.badge-one {
    top: 793px;
    left: 656px;
}
.badge-two {
    top: 1503px;
    left: 566px;
}

/* status bar */
.statusbar {
    height: 73px;
    display: grid;
    grid-template-columns: 1695px 1735px 1fr;
    align-items: center;
    color: white;
    border-bottom: 2px solid black;
    background: #262626;
}
.status-left {
    padding-left: 20px;
    font-size: 30px;
    color: #e6e6e6;
    letter-spacing: -0.02em;
}
.zoom-group {
    display: flex;
    align-items: center;
    font-size: 33px;
}
.slider {
    display: flex;
    align-items: center;
    margin: 0 16px 0 16px;
    width: 149px;
}
.slider-a,
.slider-b {
    height: 7px;
    background: white;
    border-radius: 4px;
}
.slider-a {
    width: 11px;
}
.slider-b {
    flex: 1;
}
.slider-thumb {
    width: 30px;
    height: 30px;
    border-radius: 50%;
    background: white;
    margin: 0 2px 0 0;
}
.zoom-ic {
    width: 44px;
    height: 40px;
    stroke-width: 2;
    margin-right: 25px;
}
.zoom-ic text {
    fill: white;
    stroke: none;
    font-size: 22px;
    text-anchor: middle;
}
.status-right {
    display: flex;
    align-items: center;
}
.connected {
    width: 256px;
    height: 50px;
    border-radius: 25px;
    background: #4a4a4a;
    display: flex;
    align-items: center;
    padding-left: 25px;
    gap: 18px;
    color: #77f200;
    font-size: 32px;
    font-weight: 500;
}
.connected svg {
    width: 30px;
    height: 36px;
    fill: #77f200;
    stroke: none;
}
.ic-globe {
    width: 40px;
    height: 40px;
    stroke-width: 2.4;
    margin: 0 12px 0 59px;
}
```
